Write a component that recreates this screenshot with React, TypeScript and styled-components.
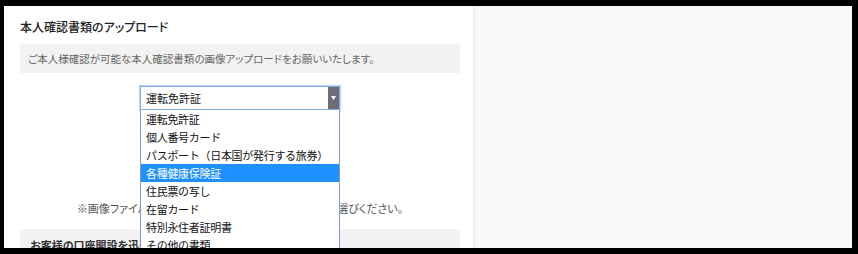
import React, { useState } from "react";
import styled, { createGlobalStyle } from "styled-components";

const GlobalStyle = createGlobalStyle`
  html, body {
    margin: 0;
    background: #000;
  }
  * {
    box-sizing: border-box;
  }
`;

const Frame = styled.div`
  height: 254px;
  padding: 6px 6px 6px 4px;
  font-family: "Noto Sans CJK JP", "Noto Sans", sans-serif;
  font-feature-settings: "palt";
`;

const Page = styled.div`
  display: flex;
  height: 100%;
  background: #f8f9fb;
  overflow: hidden;
`;

const Card = styled.section`
  width: 469px;
  background: #fff;
  box-shadow: 1px 0 3px rgba(0, 0, 0, 0.08);
  padding: 13px 13px 0 16px;
`;

const Title = styled.h2`
  margin: 0 0 9px;
  font-size: 12px;
  line-height: 16px;
  font-weight: 500;
  color: #222;
`;

const Notice = styled.div`
  height: 29px;
  padding: 0 8px;
  background: #f2f2f2;
  color: #666;
  font-size: 10.5px;
  line-height: 29px;
`;

const SelectArea = styled.div`
  position: relative;
  width: 200px;
  margin: 13px auto 0;
`;

const SelectBox = styled.div`
  display: flex;
  height: 24px;
  border: 1px solid #86a8e4;
  box-shadow: 0 0 1px 1px rgba(130, 165, 230, 0.45);
  background: #fff;
`;

const SelectValue = styled.span`
  flex: 1;
  padding-left: 5px;
  font-size: 11px;
  line-height: 22px;
  color: #111;
`;

const ArrowBox = styled.span`
  display: flex;
  align-items: center;
  justify-content: center;
  width: 11px;
  background: #6c7076;
`;

const OptionList = styled.ul`
  position: absolute;
  top: 100%;
  left: 0;
  width: 200px;
  margin: 0;
  padding: 0;
  list-style: none;
  background: #fff;
  border: 1px solid #7f9ccf;
  border-top: none;
  z-index: 10;
`;

const Option = styled.li<{ $active?: boolean }>`
  height: 18px;
  padding-left: 5px;
  font-size: 11px;
  line-height: 18px;
  white-space: nowrap;
  font-feature-settings: normal;
  letter-spacing: -0.3px;
  color: ${(p) => (p.$active ? "#fff" : "#111")};
  background: ${(p) => (p.$active ? "#1e90ff" : "transparent")};
`;

const FileNote = styled.p`
  margin: 90px 0 0;
  text-align: center;
  font-size: 11px;
  line-height: 16px;
  color: #555;
`;

const InfoBox = styled.div`
  margin-top: 13px;
  padding: 8px 10px;
  background: #f2f2f2;
  font-size: 11px;
  line-height: 16px;
  font-weight: bold;
  color: #333;
`;

const Side = styled.div`
  flex: 1;
`;

const options = [
  "運転免許証",
  "個人番号カード",
  "パスポート（日本国が発行する旅券）",
  "各種健康保険証",
  "住民票の写し",
  "在留カード",
  "特別永住者証明書",
  "その他の書類",
];

export default function App() {
  const [hover, setHover] = useState(3);

  return (
    <>
      <GlobalStyle />
      <Frame>
        <Page>
          <Card>
            <Title>本人確認書類のアップロード</Title>
            <Notice>ご本人様確認が可能な本人確認書類の画像アップロードをお願いいたします。</Notice>
            <SelectArea>
              <SelectBox>
                <SelectValue>運転免許証</SelectValue>
                <ArrowBox>
                  <svg width="5" height="4" viewBox="0 0 5 4">
                    <path d="M0 0h5L2.5 4z" fill="#fff" />
                  </svg>
                </ArrowBox>
              </SelectBox>
              <OptionList>
                {options.map((o, i) => (
                  <Option key={o} $active={i === hover} onMouseEnter={() => setHover(i)}>
                    {o}
                  </Option>
                ))}
              </OptionList>
            </SelectArea>
            <FileNote>※画像ファイルは、JPEG・PNG・GIF形式のいずれかをお選びください。</FileNote>
            <InfoBox>お客様の口座開設を迅速に行うため、ご協力をお願いします。</InfoBox>
          </Card>
          <Side />
        </Page>
      </Frame>
    </>
  );
}
